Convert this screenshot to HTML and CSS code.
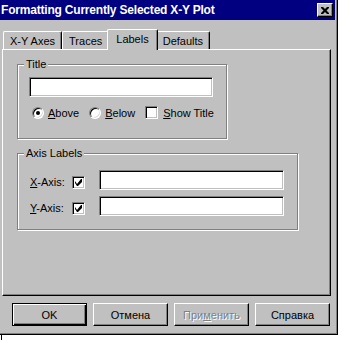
FILE: index.html
```html
<!DOCTYPE html>
<html lang="en">
<head>
    <meta charset="UTF-8">
    <title>Formatting Currently Selected X-Y Plot</title>
    <link rel="stylesheet" href="styles.css">
</head>
<body>
    <div class="window">
        <div class="titlebar">
            <span class="caption">Formatting Currently Selected X-Y Plot</span>
            <div class="close-btn">
                <svg width="8" height="7" viewBox="0 0 8 7">
                    <path d="M0 0h2l2 2 2-2h2v1l-2.5 2.5L8 6v1H6L4 5 2 7H0V6l2.5-2.5L0 1z" fill="#000"/>
                </svg>
            </div>
        </div>

        <div class="tabs">
            <div class="tab">X-Y Axes</div>
            <div class="tab">Traces</div>
            <div class="tab active">Labels</div>
            <div class="tab">Defaults</div>
        </div>

        <div class="panel">
            <div class="group title-group">
                <span class="legend">Title</span>
                <div class="field title-field"></div>
                <div class="options">
                    <div class="opt"><span class="radio checked"></span><span><u>A</u>bove</span></div>
                    <div class="opt"><span class="radio"></span><span><u>B</u>elow</span></div>
                    <div class="opt"><span class="check"></span><span><u>S</u>how Title</span></div>
                </div>
            </div>

            <div class="group axis-group">
                <span class="legend">Axis Labels</span>
                <div class="axis-row">
                    <span class="axis-name"><u>X</u>-Axis:</span>
                    <span class="check">
                        <svg width="7" height="7" viewBox="0 0 7 7"><path d="M6 0h1v3L3 7H2L0 4V2l2 3z" fill="#000"/></svg>
                    </span>
                    <div class="field axis-field"></div>
                </div>
                <div class="axis-row">
                    <span class="axis-name"><u>Y</u>-Axis:</span>
                    <span class="check">
                        <svg width="7" height="7" viewBox="0 0 7 7"><path d="M6 0h1v3L3 7H2L0 4V2l2 3z" fill="#000"/></svg>
                    </span>
                    <div class="field axis-field"></div>
                </div>
            </div>
        </div>

        <div class="buttons">
            <div class="btn default">OK</div>
            <div class="btn">Отмена</div>
            <div class="btn disabled">При<u>м</u>енить</div>
            <div class="btn">Справка</div>
        </div>
    </div>
    <div class="below"></div>
</body>
</html>
```

FILE: styles.css
```css
* {
    box-sizing: border-box;
}
body {
    margin: 0;
    background-color: #fff;
    font-family: 'Liberation Sans', Arial, sans-serif;
    font-size: 11px;
    color: #000;
}
.window {
    width: 338px;
    height: 335px;
    background-color: #c0c0c0;
    border-right: 1px solid #000;
    border-bottom: 1px solid #000;
    box-shadow: inset -1px -1px #808080;
}
.titlebar {
    display: flex;
    align-items: center;
    justify-content: space-between;
    height: 20px;
    margin-right: 2px;
    padding: 0 2px 0 1px;
    background-color: #000080;
}
.caption {
    color: #fff;
    font-weight: bold;
    font-size: 12px;
    letter-spacing: -0.2px;
}
.close-btn {
    display: flex;
    align-items: center;
    justify-content: center;
    width: 16px;
    height: 14px;
    background-color: #c0c0c0;
    border-top: 1px solid #fff;
    border-left: 1px solid #fff;
    border-right: 1px solid #000;
    border-bottom: 1px solid #000;
    box-shadow: inset -1px -1px #808080;
}

/* tab strip */
.tabs {
    display: flex;
    align-items: flex-end;
    height: 20px;
    margin-top: 9px;
    padding-left: 3px;
    position: relative;
    z-index: 1;
}
.tab {
    height: 18px;
    padding: 2px 6px 0;
    line-height: 14px;
    background-color: #c0c0c0;
    border-top: 1px solid #fff;
    border-left: 1px solid #fff;
    border-right: 1px solid #000;
    border-radius: 2px 2px 0 0;
    box-shadow: inset -1px 0 #808080;
}
.tab.active {
    height: 21px;
    margin: 0 -2px -1px;
    padding: 2px 8px 0;
    position: relative;
    z-index: 2;
}

/* page */
.panel {
    width: 329px;
    height: 247px;
    margin-left: 2px;
    padding: 14px 0 0 14px;
    border-top: 1px solid #fff;
    border-left: 1px solid #fff;
    border-right: 1px solid #000;
    border-bottom: 1px solid #000;
    box-shadow: inset -1px -1px #808080;
}
.group {
    position: relative;
    border: 1px solid #808080;
    box-shadow: inset 1px 1px #fff, 1px 1px #fff;
}
.legend {
    position: absolute;
    top: -8px;
    left: 6px;
    padding: 0 2px;
    background-color: #c0c0c0;
    line-height: 14px;
}
.title-group {
    width: 210px;
    height: 75px;
    padding: 12px 0 0 11px;
}
.axis-group {
    width: 281px;
    height: 77px;
    margin-top: 14px;
    padding: 16px 0 0 12px;
}

/* sunken text box */
.field {
    height: 20px;
    background-color: #fff;
    border-top: 1px solid #808080;
    border-left: 1px solid #808080;
    border-right: 1px solid #fff;
    border-bottom: 1px solid #fff;
    box-shadow: inset 1px 1px #000, inset -1px -1px #c0c0c0;
}
.title-field {
    width: 184px;
}
.axis-field {
    width: 185px;
}

.options {
    display: flex;
    align-items: center;
    gap: 10px;
    margin-top: 9px;
    padding-left: 3px;
}
.opt {
    display: flex;
    align-items: center;
    gap: 4px;
}
.opt .check {
    margin-right: 1px;
}
.radio {
    position: relative;
    width: 12px;
    height: 12px;
    border-radius: 50%;
    background-color: #fff;
    border: 1px solid;
    border-color: #808080 #fff #fff #808080;
    box-shadow: inset 1px 1px #000, inset -1px -1px #dfdfdf;
}
.radio.checked::after {
    content: '';
    position: absolute;
    top: 3px;
    left: 3px;
    width: 4px;
    height: 4px;
    border-radius: 50%;
    background-color: #000;
}
.check {
    display: flex;
    align-items: center;
    justify-content: center;
    width: 13px;
    height: 13px;
    background-color: #fff;
    border-top: 1px solid #808080;
    border-left: 1px solid #808080;
    border-right: 1px solid #fff;
    border-bottom: 1px solid #fff;
    box-shadow: inset 1px 1px #000, inset -1px -1px #c0c0c0;
}

.axis-row {
    display: flex;
    align-items: center;
    height: 20px;
    margin-bottom: 6px;
}
.axis-row .check {
    margin-top: 4px;
    margin-right: 14px;
}
.axis-name {
    width: 42px;
    padding-top: 3px;
}

/* dialog buttons */
.buttons {
    display: flex;
    gap: 6px;
    padding: 7px 0 0 12px;
}
.btn {
    display: flex;
    align-items: center;
    justify-content: center;
    width: 75px;
    height: 23px;
    border-top: 1px solid #fff;
    border-left: 1px solid #fff;
    border-right: 1px solid #000;
    border-bottom: 1px solid #000;
    box-shadow: inset -1px -1px #808080;
}
.btn.default {
    border: 1px solid #000;
    box-shadow: inset 1px 1px #fff, inset -1px -1px #000, inset -2px -2px #808080;
}
.btn.disabled {
    color: #808080;
    text-shadow: 1px 1px #fff;
}
.below {
    height: 5px;
    margin-left: 1px;
    border-left: 1px solid #000;
}
```
